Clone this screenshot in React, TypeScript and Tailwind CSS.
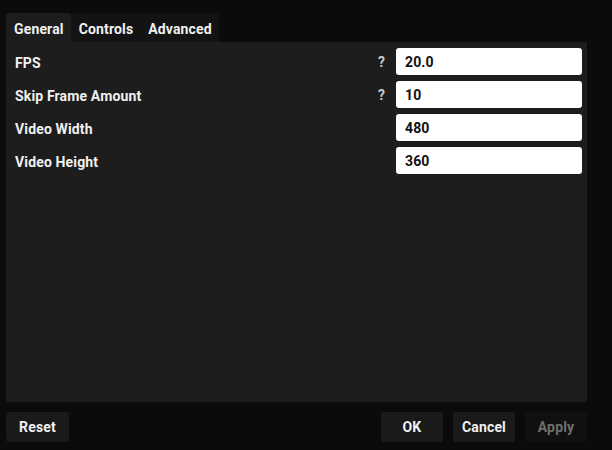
import React from "react";

type Field = {
  label: string;
  value: string;
  help?: boolean;
};

const fields: Field[] = [
  { label: "FPS", value: "20.0", help: true },
  { label: "Skip Frame Amount", value: "10", help: true },
  { label: "Video Width", value: "480" },
  { label: "Video Height", value: "360" },
];

const tabs = ["General", "Controls", "Advanced"];

export default function App() {
  return (
    <div
      className="flex h-[450px] w-[612px] flex-col bg-[#0b0b0b] pb-[8px] pl-[6px] pr-[25px] pt-[13px] text-[14px] font-bold tracking-[0.15px]"
      style={{ fontFamily: "Roboto, 'Liberation Sans', sans-serif" }}
    >
      {/* tab strip */}
      <div className="flex h-[29px] self-start rounded-t-[3px] bg-[#131313]">
        {tabs.map((tab, i) => (
          <div
            key={tab}
            className={
              i === 0
                ? "flex items-center rounded-t-[3px] bg-[#1d1d1d] pl-2 pr-[7px] pt-[3px] text-[#f0f0f0]"
                : "flex items-center pl-2 pr-[7px] pt-[3px] text-[#f0f0f0]"
            }
          >
            {tab}
          </div>
        ))}
      </div>

      {/* settings panel */}
      <div className="flex flex-1 flex-col gap-[6px] rounded-b-[3px] bg-[#1d1d1d] pl-[9px] pr-[5px] pt-[6px]">
        {fields.map((f) => (
          <div key={f.label} className="flex h-[27px] items-center">
            <span className="flex-1 pt-[3px] text-[#f0f0f0]">{f.label}</span>
            <span className="w-[18px] pt-[2px] text-[#c3ccd3]">{f.help ? "?" : ""}</span>
            <div className="flex h-full w-[186px] items-center rounded-[3px] bg-white px-[9px] pt-[1px] text-[#111]">
              {f.value}
            </div>
          </div>
        ))}
      </div>

      {/* footer buttons */}
      <div className="mt-[10px] flex h-[30px] gap-[10px]">
        <button className="w-[63px] rounded-[3px] bg-[#1a1a1a] pt-[1px] font-bold text-[#f0f0f0]">Reset</button>
        <div className="flex-1" />
        <button className="w-[62px] rounded-[3px] bg-[#1a1a1a] pt-[1px] font-bold text-[#f0f0f0]">OK</button>
        <button className="w-[62px] rounded-[3px] bg-[#1a1a1a] pt-[1px] font-bold text-[#f0f0f0]">Cancel</button>
        <button className="w-[62px] rounded-[3px] bg-[#101010] pt-[1px] font-bold text-[#6f6f6f]">Apply</button>
      </div>
    </div>
  );
}
